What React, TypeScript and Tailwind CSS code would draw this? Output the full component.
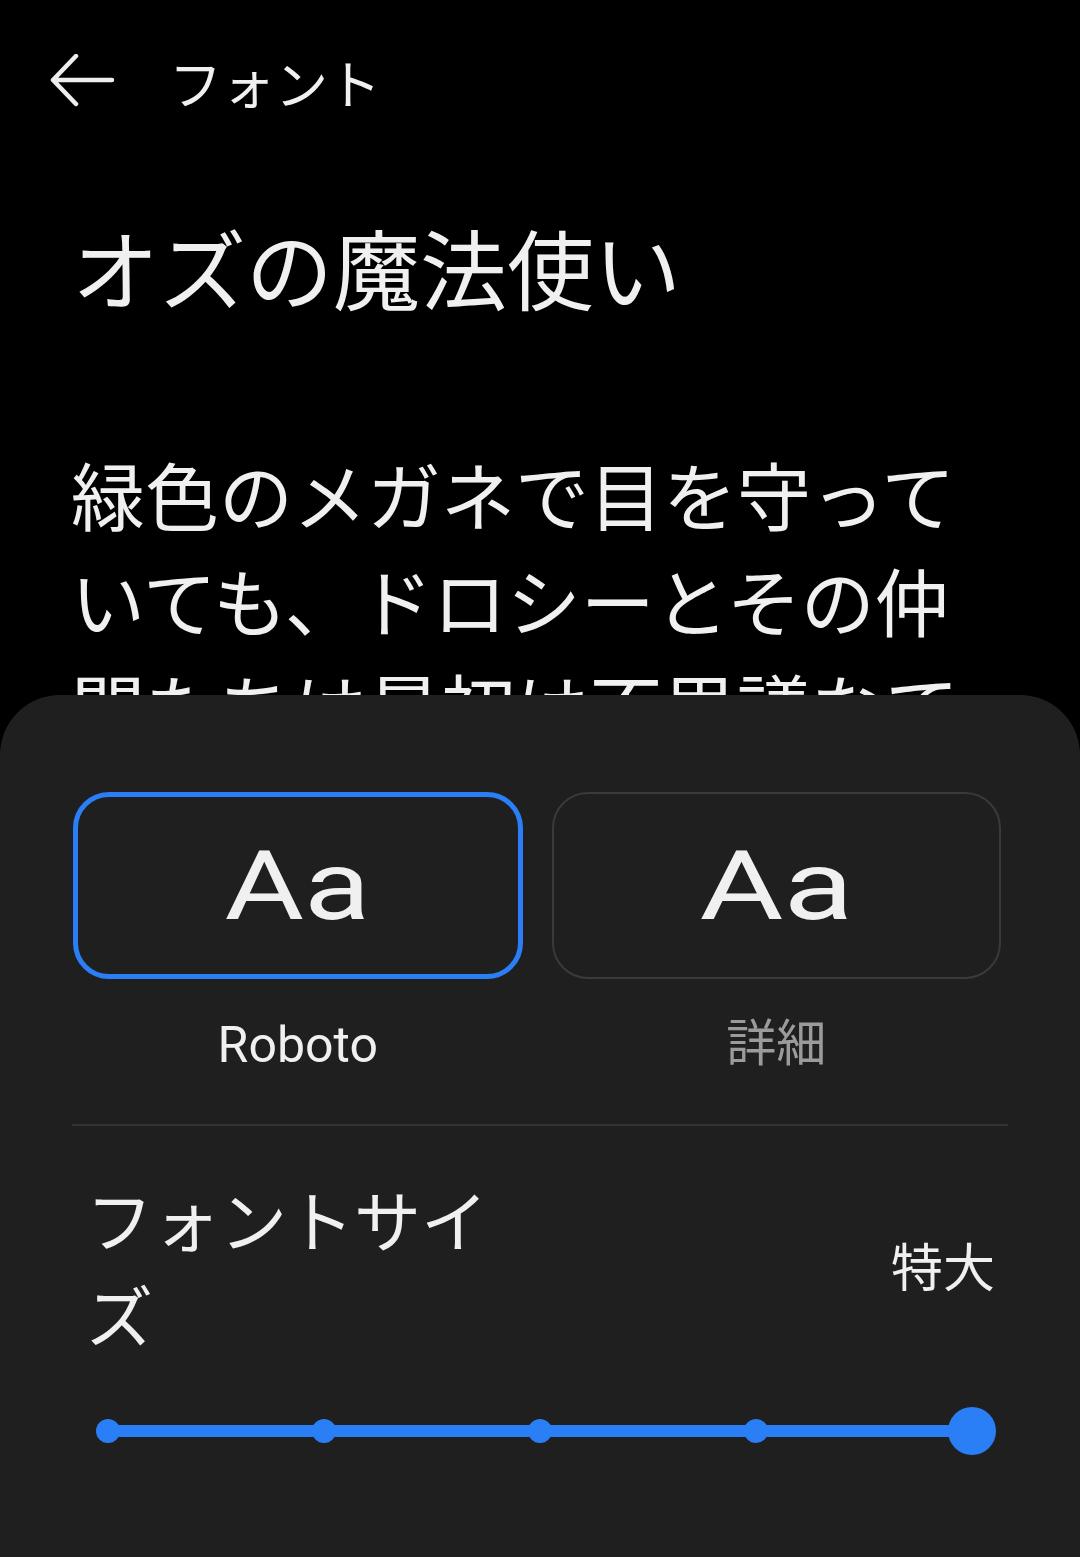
import React from 'react';

const jp = { fontFamily: '"Noto Sans CJK JP", "Noto Sans", sans-serif' };

function BackArrow() {
  return (
    <svg width="66" height="56" viewBox="0 0 66 56" fill="none" className="text-[#eeeeee]">
      <path d="M62 26H4M26 2L3 26l23 24" stroke="currentColor" strokeWidth="4.5" strokeLinecap="round" strokeLinejoin="round" />
    </svg>
  );
}

function FontCard({ selected, label }: { selected?: boolean; label: string }) {
  return (
    <div className="flex flex-col items-center">
      <div
        className={`w-full h-[187px] rounded-[36px] flex items-center justify-center ${
          selected ? 'border-[5px] border-[#2b7ff6]' : 'border-2 border-[#3a3a3a]'
        }`}
      >
        <span
          className={`text-[96px] leading-none text-[#f0f0f0] ${selected ? 'scale-x-[1.27]' : 'scale-x-[1.34]'}`}
          style={{ fontFamily: 'Roboto, "Noto Sans", sans-serif' }}
        >
          Aa
        </span>
      </div>
      <span
        className={`text-[50px] leading-none ${selected ? 'mt-[41px] text-[#f0f0f0]' : 'mt-[35px] text-[#9b9b9b]'}`}
        style={selected ? { fontFamily: 'Roboto, sans-serif' } : jp}
      >
        {label}
      </span>
    </div>
  );
}

export default function App() {
  const stops = ['left-[0%]', 'left-[25%]', 'left-[50%]', 'left-[75%]'];
  return (
    <div className="w-[1080px] h-[1557px] bg-black flex flex-col overflow-hidden text-[#f0f0f0]" style={jp}>
      {/* Top content */}
      <div className="h-[695px] overflow-hidden shrink-0">
        <div className="h-[164px] flex items-center pl-[50px]">
          <BackArrow />
          <span className="ml-[53px] text-[53px] leading-none">フォント</span>
        </div>
        <h1 className="mt-[59px] pl-[72px] text-[87px] leading-none font-normal">オズの魔法使い</h1>
        <p className="mt-[130px] pl-[71px] w-[1010px] text-[74px] leading-[106px]">
          緑色のメガネで目を守っていても、ドロシーとその仲間たちは最初は不思議なてかりに目がくらみました。
        </p>
      </div>

      {/* Bottom sheet */}
      <div className="flex-1 bg-[#1f1f1f] rounded-t-[60px] flex flex-col">
        <div className="grid grid-cols-2 gap-[29px] pl-[73px] pr-[79px] pt-[97px]">
          <FontCard selected label="Roboto" />
          <FontCard label="詳細" />
        </div>

        <div className="mt-[54px] mx-[72px] h-[2px] bg-[#333333]" />

        <div className="mt-[44px] pl-[86px] pr-[85px] flex items-center justify-between">
          <span className="w-[440px] text-[67px] leading-[95px]">フォントサイズ</span>
          <span className="text-[52px] leading-none">特大</span>
        </div>

        <div className="mt-[47px] mx-[108px] relative h-[48px]">
          <div className="absolute inset-x-0 top-1/2 -translate-y-1/2 h-[12px] bg-[#2b7ff6]" />
          {stops.map((s) => (
            <div
              key={s}
              className={`absolute ${s} top-1/2 -translate-x-1/2 -translate-y-1/2 w-[24px] h-[24px] rounded-full bg-[#2b7ff6]`}
            />
          ))}
          <div className="absolute left-full top-1/2 -translate-x-1/2 -translate-y-1/2 w-[48px] h-[48px] rounded-full bg-[#2b7ff6]" />
        </div>
      </div>
    </div>
  );
}
